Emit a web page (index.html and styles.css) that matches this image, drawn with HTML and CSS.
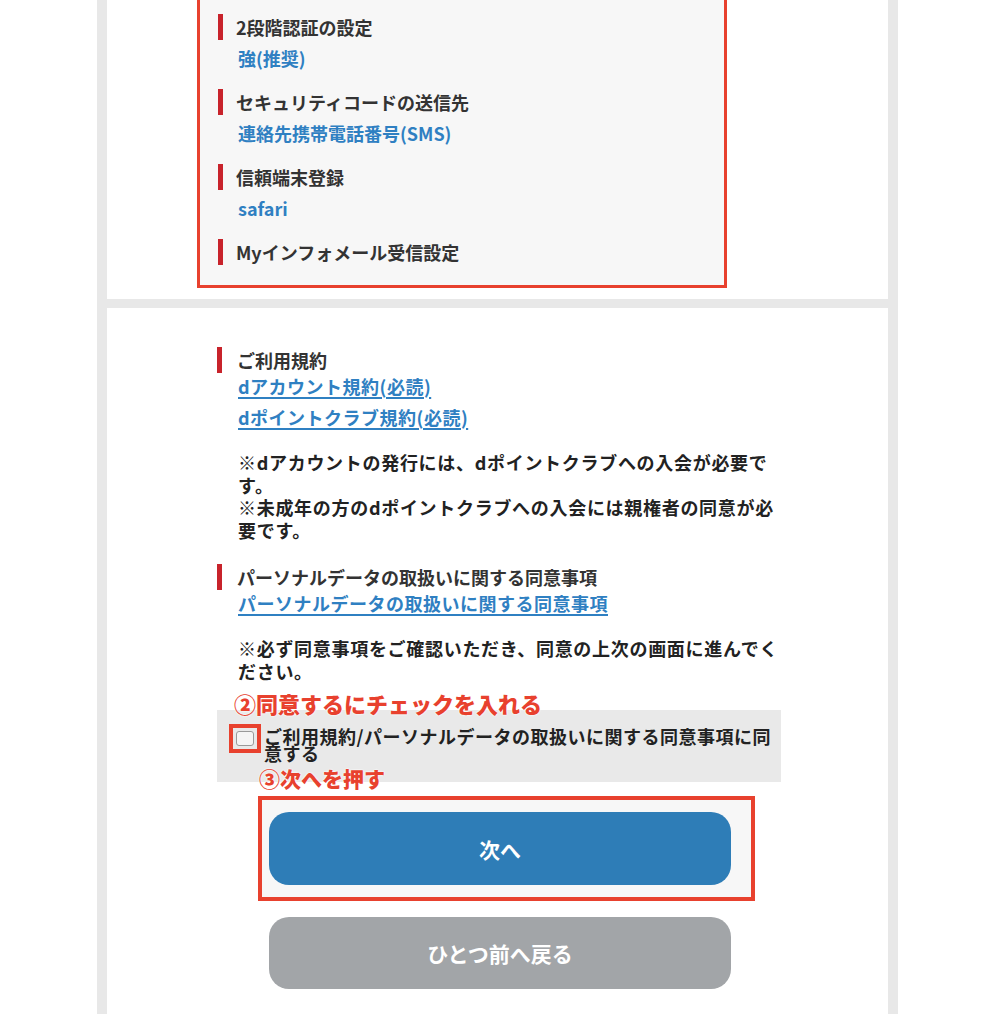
FILE: index.html
```html
<!DOCTYPE html>
<html lang="ja">
<head>
    <meta charset="utf-8">
    <meta name="viewport" content="width=device-width, initial-scale=1.0">
    <title>dアカウント 登録内容の確認</title>
    <link rel="stylesheet" href="styles.css">
</head>

<body>
    <div class="page">
        <!-- 登録内容 -->
        <div class="panel panel-top">
            <div class="mark-box">
                <div class="item">
                    <div class="item-title">2段階認証の設定</div>
                    <div class="item-value">強(推奨)</div>
                </div>
                <div class="item">
                    <div class="item-title">セキュリティコードの送信先</div>
                    <div class="item-value">連絡先携帯電話番号(SMS)</div>
                </div>
                <div class="item">
                    <div class="item-title">信頼端末登録</div>
                    <div class="item-value">safari</div>
                </div>
                <div class="item">
                    <div class="item-title">Myインフォメール受信設定</div>
                </div>
            </div>
        </div>

        <!-- 規約・同意 -->
        <div class="panel panel-terms">
            <div class="section">
                <div class="item-title">ご利用規約</div>
                <a class="terms-link" href="#">dアカウント規約(必読)</a>
                <a class="terms-link" href="#">dポイントクラブ規約(必読)</a>
                <p class="note">※dアカウントの発行には、dポイントクラブへの入会が必要です。<br>※未成年の方のdポイントクラブへの入会には親権者の同意が必要です。</p>
            </div>

            <div class="section">
                <div class="item-title">パーソナルデータの取扱いに関する同意事項</div>
                <a class="terms-link" href="#">パーソナルデータの取扱いに関する同意事項</a>
                <p class="note">※必ず同意事項をご確認いただき、同意の上次の画面に進んでください。</p>
            </div>

            <label class="agree">
                <span class="callout callout-check">②同意するにチェックを入れる</span>
                <span class="check-mark"><span class="check"></span></span>
                <span class="agree-text">ご利用規約/パーソナルデータの取扱いに関する同意事項に同意する</span>
                <span class="callout callout-next">③次へを押す</span>
            </label>

            <div class="next-mark">
                <button class="btn btn-next">次へ</button>
            </div>
            <button class="btn btn-back">ひとつ前へ戻る</button>
        </div>
    </div>
</body>
</html>
```

FILE: styles.css
```css
body {
    margin: 0;
    background-color: #ffffff;
    font-family: "Noto Sans CJK JP", "Noto Sans", sans-serif;
    color: #333333;
}

.page {
    width: 781px;
    margin: -37px 0 0 97px;
    padding: 0 10px;
    background-color: #e8e8e8;
    display: flex;
    flex-direction: column;
    gap: 9px;
}

.panel {
    background-color: #ffffff;
}

/* 上の登録内容（赤枠） */
.panel-top {
    padding: 30px 0 11px 90px;
}

.mark-box {
    width: 506px;
    padding: 18px 0 20px 18px;
    border: 3px solid #e8412e;
    background-color: #f7f7f7;
    display: flex;
    flex-direction: column;
    gap: 18px;
}

.item {
    display: flex;
    flex-direction: column;
    gap: 5px;
}

.item-title {
    border-left: 5px solid #c8232b;
    padding-left: 13px;
    font-size: 18px;
    font-weight: bold;
    line-height: 26px;
    color: #333333;
}

.item-value {
    padding-left: 20px;
    font-size: 18px;
    font-weight: bold;
    line-height: 26px;
    color: #2f80c2;
}

/* 規約 */
.panel-terms {
    padding: 39px 107px 40px 110px;
    display: flex;
    flex-direction: column;
}

.section {
    display: flex;
    flex-direction: column;
}

.section .item-title {
    padding-left: 15px;
}

.terms-link {
    display: block;
    align-self: flex-start;
    margin: 0 0 5px 21px;
    font-size: 18px;
    font-weight: bold;
    line-height: 26px;
    letter-spacing: 0.5px;
    color: #2f80c2;
    text-decoration: underline;
    text-decoration-thickness: 2px;
    text-underline-offset: 3px;
}

.note {
    margin: 16px 0 22px 21px;
    font-size: 18px;
    font-weight: bold;
    line-height: 22.7px;
    letter-spacing: 0.7px;
    color: #222222;
}

.section + .section .note {
    margin-bottom: 28px;
}

/* 同意チェック */
.agree {
    position: relative;
    display: flex;
    align-items: flex-start;
    gap: 3px;
    padding: 17px 4px 20px 12px;
    background-color: #e9e9e9;
}

.check-mark {
    flex-shrink: 0;
    margin-top: -3px;
    padding: 3px;
    border: 4px solid #e8412e;
}

.check {
    display: block;
    width: 16px;
    height: 13px;
    border: 1px solid #9a9a9a;
    border-radius: 3px;
    background-color: #f5f5f5;
}

.agree-text {
    font-size: 18px;
    font-weight: bold;
    line-height: 17px;
    letter-spacing: 0.5px;
    color: #222222;
    padding-top: 1px;
}

.callout {
    position: absolute;
    font-weight: 900;
    line-height: 26px;
    color: #e8412e;
    white-space: nowrap;
    text-shadow: 0 0 2px #ffffff, 0 0 2px #ffffff;
}

.callout-check {
    left: 17px;
    top: -20px;
    font-size: 22px;
}

.callout-next {
    left: 42px;
    top: 55px;
    font-size: 21px;
}

/* ボタン */
.next-mark {
    align-self: flex-start;
    margin: 14px 0 0 41px;
    padding: 12px 20px 12px 7px;
    border: 4px solid #e8412e;
    background-color: #f7f7f7;
}

.btn {
    display: block;
    width: 462px;
    height: 73px;
    border: none;
    border-radius: 20px;
    font-family: inherit;
    font-size: 21px;
    font-weight: bold;
    color: #ffffff;
    cursor: pointer;
}

.btn-next {
    background-color: #2e7db7;
}

.btn-back {
    margin: 16px 0 0 52px;
    height: 72px;
    background-color: #a2a5a8;
}
```
